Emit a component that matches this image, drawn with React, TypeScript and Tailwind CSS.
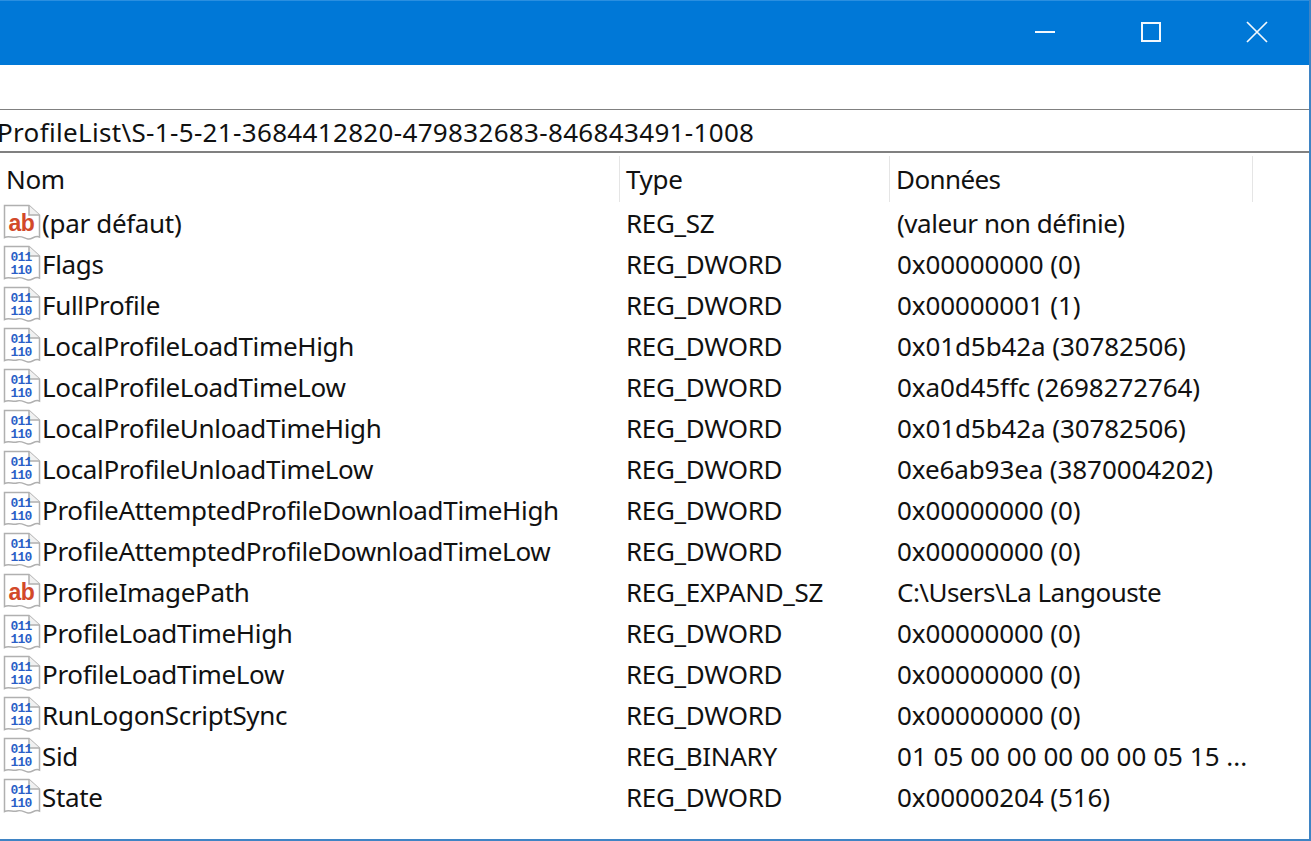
const rows: [string, string, string, string, string][] = [
  ["s", "(par défaut)", "REG_SZ", "(valeur non définie)", "tracking-[-0.45px]"],
  ["b", "Flags", "REG_DWORD", "0x00000000 (0)", "tracking-[-0.1px]"],
  ["b", "FullProfile", "REG_DWORD", "0x00000001 (1)", "tracking-[-0.1px]"],
  ["b", "LocalProfileLoadTimeHigh", "REG_DWORD", "0x01d5b42a (30782506)", "tracking-[-0.1px]"],
  ["b", "LocalProfileLoadTimeLow", "REG_DWORD", "0xa0d45ffc (2698272764)", "tracking-[-0.1px]"],
  ["b", "LocalProfileUnloadTimeHigh", "REG_DWORD", "0x01d5b42a (30782506)", "tracking-[-0.1px]"],
  ["b", "LocalProfileUnloadTimeLow", "REG_DWORD", "0xe6ab93ea (3870004202)", "tracking-[-0.1px]"],
  ["b", "ProfileAttemptedProfileDownloadTimeHigh", "REG_DWORD", "0x00000000 (0)", "tracking-[-0.1px]"],
  ["b", "ProfileAttemptedProfileDownloadTimeLow", "REG_DWORD", "0x00000000 (0)", "tracking-[-0.1px]"],
  ["s", "ProfileImagePath", "REG_EXPAND_SZ", "C:\\Users\\La Langouste", "tracking-[-0.55px]"],
  ["b", "ProfileLoadTimeHigh", "REG_DWORD", "0x00000000 (0)", "tracking-[-0.1px]"],
  ["b", "ProfileLoadTimeLow", "REG_DWORD", "0x00000000 (0)", "tracking-[-0.1px]"],
  ["b", "RunLogonScriptSync", "REG_DWORD", "0x00000000 (0)", "tracking-[-0.1px]"],
  ["b", "Sid", "REG_BINARY", "01 05 00 00 00 00 00 05 15 ...", "tracking-[0.03px]"],
  ["b", "State", "REG_DWORD", "0x00000204 (516)", "tracking-[-0.1px]"],
];

function RegIcon({ kind }: { kind: string }) {
  return (
    <svg width="38" height="38" viewBox="0 0 38 38" className="shrink-0 mb-[4px]">
      <path
        d="M1.5 1.5H26L36.5 11V33C32 30.5 29 36 25 35C21 34 18 31.5 14 33C10 34.5 6 31 1.5 33.5Z"
        fill="#fff"
        stroke="#b0b0b0"
        strokeWidth="1.5"
      />
      <path d="M26 1.5V11H36.5" fill="#f1f1f1" stroke="#b0b0b0" strokeWidth="1.5" />
      {kind === "s" ? (
        <text x="18.5" y="27" textAnchor="middle" fontSize="23" fontWeight="700" fill="#d2492a" fontFamily="'Liberation Sans', sans-serif">
          ab
        </text>
      ) : (
        <g fill="#2b5fc7" fontSize="13" fontWeight="700" fontFamily="'Liberation Mono', monospace" textAnchor="middle" letterSpacing="-0.8">
          <text x="18" y="16">011</text>
          <text x="18" y="29">110</text>
        </g>
      )}
    </svg>
  );
}

export default function App() {
  return (
    <div className="w-[1311px] h-[841px] overflow-hidden bg-white border-r-2 border-b-2 border-[#3f84c4] text-[26px] leading-none text-[#111] font-['Noto_Sans','Open_Sans',sans-serif] tracking-[-0.33px]">
      <div className="h-[65px] bg-[#0078d7] border-t border-[#2a8fe0] pb-[2px] flex justify-end">
        <div className="w-[106px] flex items-center justify-center">
          <svg width="22" height="22" viewBox="0 0 22 22"><path d="M1 11H21" stroke="#f2f8fd" strokeWidth="2" /></svg>
        </div>
        <div className="w-[106px] flex items-center justify-center">
          <svg width="22" height="22" viewBox="0 0 22 22"><rect x="2" y="2" width="18" height="18" fill="none" stroke="#f2f8fd" strokeWidth="2" /></svg>
        </div>
        <div className="w-[106px] mr-[-1px] pr-[1px] flex items-center justify-center">
          <svg width="22" height="22" viewBox="0 0 22 22"><path d="M1 1L21 21M21 1L1 21" stroke="#f2f8fd" strokeWidth="1.7" /></svg>
        </div>
      </div>
      <div className="h-[44px]" />
      <div className="h-[44px] border-t border-b-2 border-[#808080] flex items-center overflow-hidden whitespace-nowrap tracking-[0.33px] pt-[2px]">
        <span className="ml-[-3px]">ProfileList\S-1-5-21-3684412820-479832683-846843491-1008</span>
      </div>
      <div className="h-[51px] flex items-center">
        <div className="w-[620px] h-[46px] flex items-center pl-[6px] border-r border-[#e5e5e5]">Nom</div>
        <div className="w-[270px] h-[46px] flex items-center pl-[6px] border-r border-[#e5e5e5]">Type</div>
        <div className="w-[363px] h-[46px] flex items-center pl-[6px] border-r border-[#e5e5e5] tracking-[-0.6px]">Données</div>
      </div>
      {rows.map(([kind, name, type, data, tracking]) => (
        <div key={name} className="h-[41px] flex items-center whitespace-nowrap">
          <div className="w-[620px] flex items-center pl-[3px] gap-[1px]">
            <RegIcon kind={kind} />
            <span className="pb-[4px]">{name}</span>
          </div>
          <div className="w-[270px] pl-[6px] pb-[4px]">{type}</div>
          <div className={`pl-[7px] pb-[4px] ${tracking}`}>{data}</div>
        </div>
      ))}
    </div>
  );
}
